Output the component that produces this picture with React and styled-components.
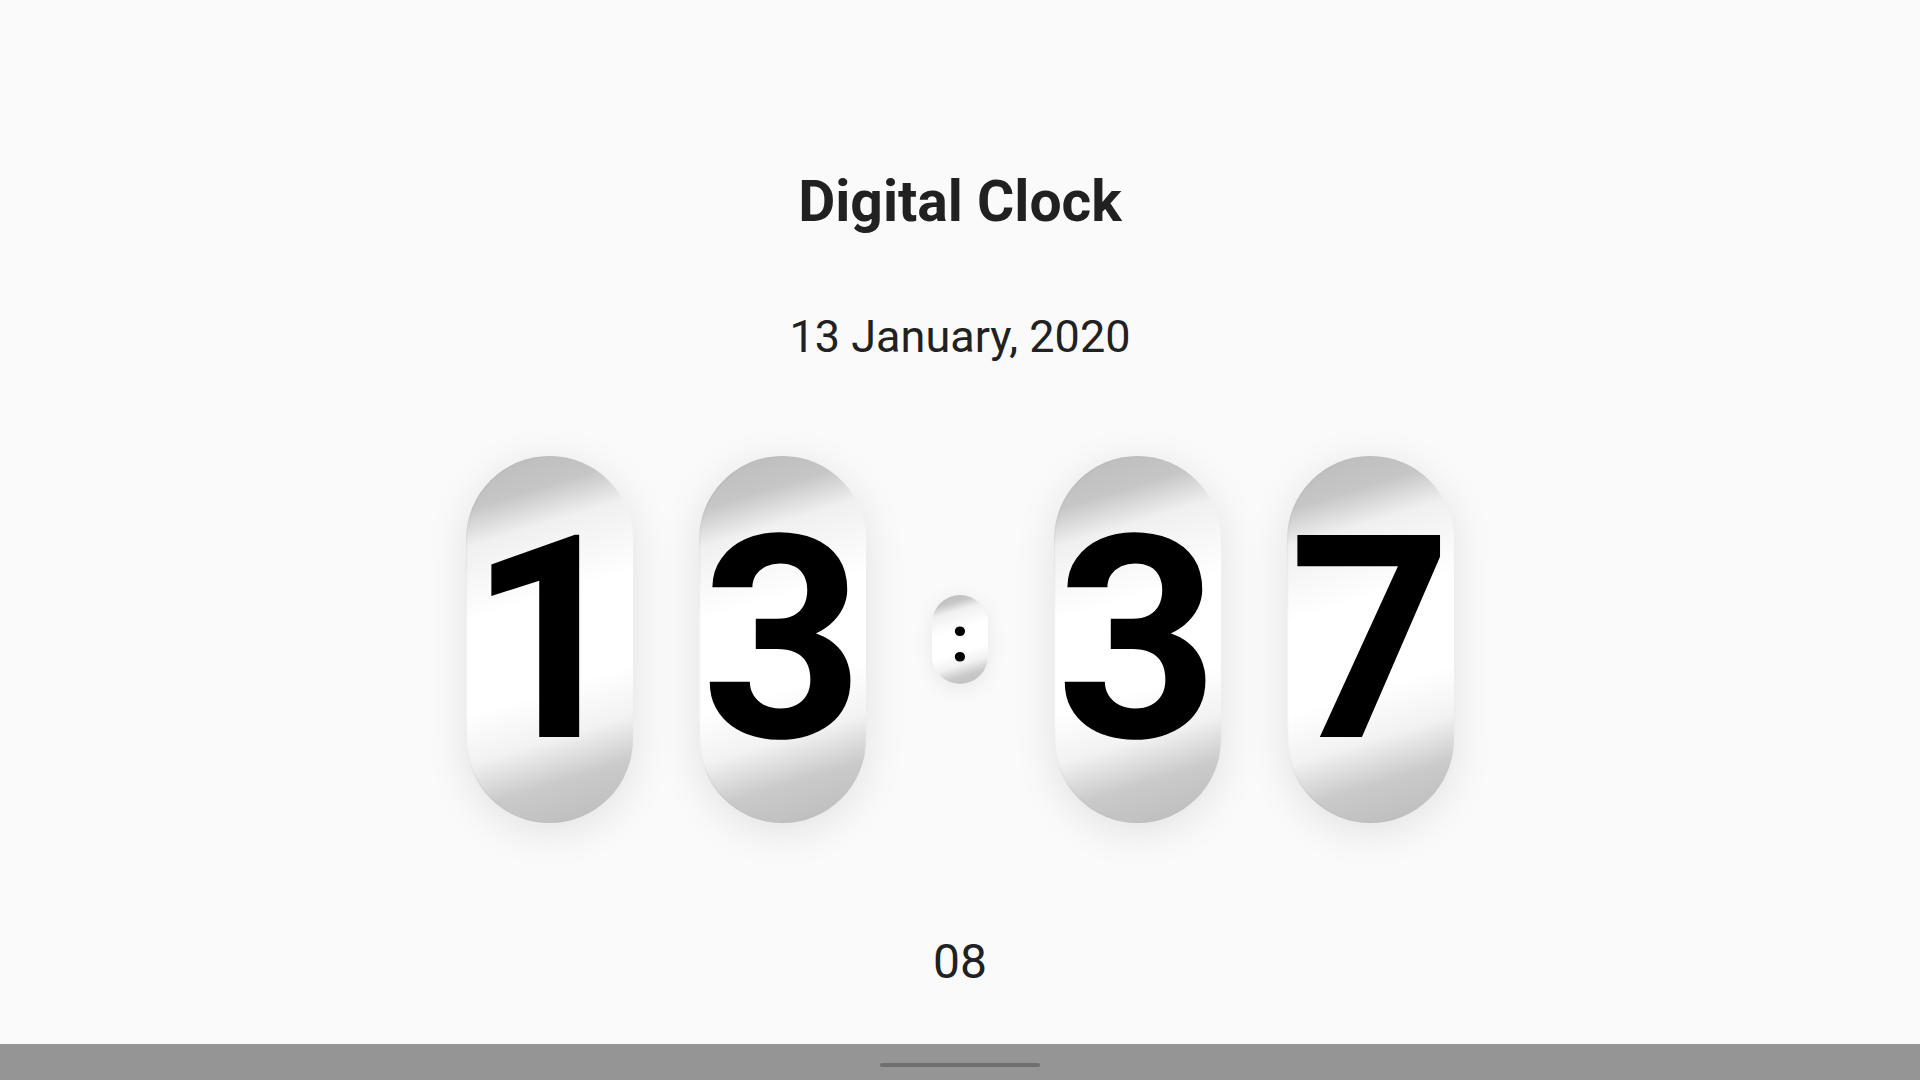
import React from "react";
import styled, { createGlobalStyle } from "styled-components";

const GlobalStyle = createGlobalStyle`
  html, body {
    margin: 0;
    padding: 0;
    background: #fafafa;
  }
  body {
    font-family: Roboto, "Liberation Sans", sans-serif;
    color: #212121;
  }
`;

const clock = {
  date: "13 January, 2020",
  hours: "13",
  minutes: "37",
  seconds: "08",
};

const App = () => {
  return (
    <>
      <GlobalStyle />
      <PageComponent>
        <MainArea>
          <Title>Digital Clock</Title>
          <DateText>{clock.date}</DateText>
          <ClockRow>
            {clock.hours.split("").map((d, i) => (
              <DigitPill key={"h" + i}>{d}</DigitPill>
            ))}
            <ColonPill>:</ColonPill>
            {clock.minutes.split("").map((d, i) => (
              <DigitPill key={"m" + i}>{d}</DigitPill>
            ))}
          </ClockRow>
          <Seconds>{clock.seconds}</Seconds>
        </MainArea>
        <NavBar>
          <NavHandle />
        </NavBar>
      </PageComponent>
    </>
  );
};

export default App;

const PageComponent = styled.div`
  width: 100vw;
  height: 100vh;
  display: flex;
  flex-direction: column;
  overflow: hidden;
`;

const MainArea = styled.div`
  flex: 1;
  display: flex;
  flex-direction: column;
  align-items: center;
  padding-top: 173px;
`;

const Title = styled.div`
  font-size: 57px;
  font-weight: 700;
  line-height: 1;
  color: #212121;
`;

const DateText = styled.div`
  font-size: 45px;
  font-weight: 400;
  line-height: 1;
  margin-top: 84px;
  color: #212121;
`;

const ClockRow = styled.div`
  display: flex;
  align-items: center;
  gap: 66px;
  margin-top: 97px;
`;

const silver = `linear-gradient(
  163deg,
  #bababa 0%,
  #c6c6c6 13%,
  #f0f0f0 22%,
  #ffffff 40%,
  #ffffff 62%,
  #f2f2f2 74%,
  #cacaca 85%,
  #bababa 100%
)`;

const DigitPill = styled.div`
  width: 167px;
  height: 367px;
  border-radius: 84px;
  background: ${silver};
  box-shadow: 0 8px 42px rgba(0, 0, 0, 0.1), inset 1px 0 2px rgba(0, 0, 0, 0.06);
  display: flex;
  align-items: center;
  justify-content: center;
  font-size: 284px;
  font-weight: 700;
  line-height: 1;
  color: #000;
`;

const ColonPill = styled.div`
  width: 56px;
  height: 89px;
  border-radius: 28px;
  background: ${silver};
  box-shadow: 0 4px 20px rgba(0, 0, 0, 0.08);
  display: flex;
  align-items: center;
  justify-content: center;
  font-size: 64px;
  font-weight: 700;
  line-height: 1;
  color: #000;
`;

const Seconds = styled.div`
  font-size: 48px;
  font-weight: 400;
  line-height: 1;
  margin-top: 115px;
  color: #212121;
`;

const NavBar = styled.div`
  height: 36px;
  flex-shrink: 0;
  background: #959595;
  display: flex;
  justify-content: center;
  align-items: flex-start;
`;

const NavHandle = styled.div`
  width: 160px;
  height: 4px;
  margin-top: 19px;
  border-radius: 2px;
  background: #6f6f6f;
`;
